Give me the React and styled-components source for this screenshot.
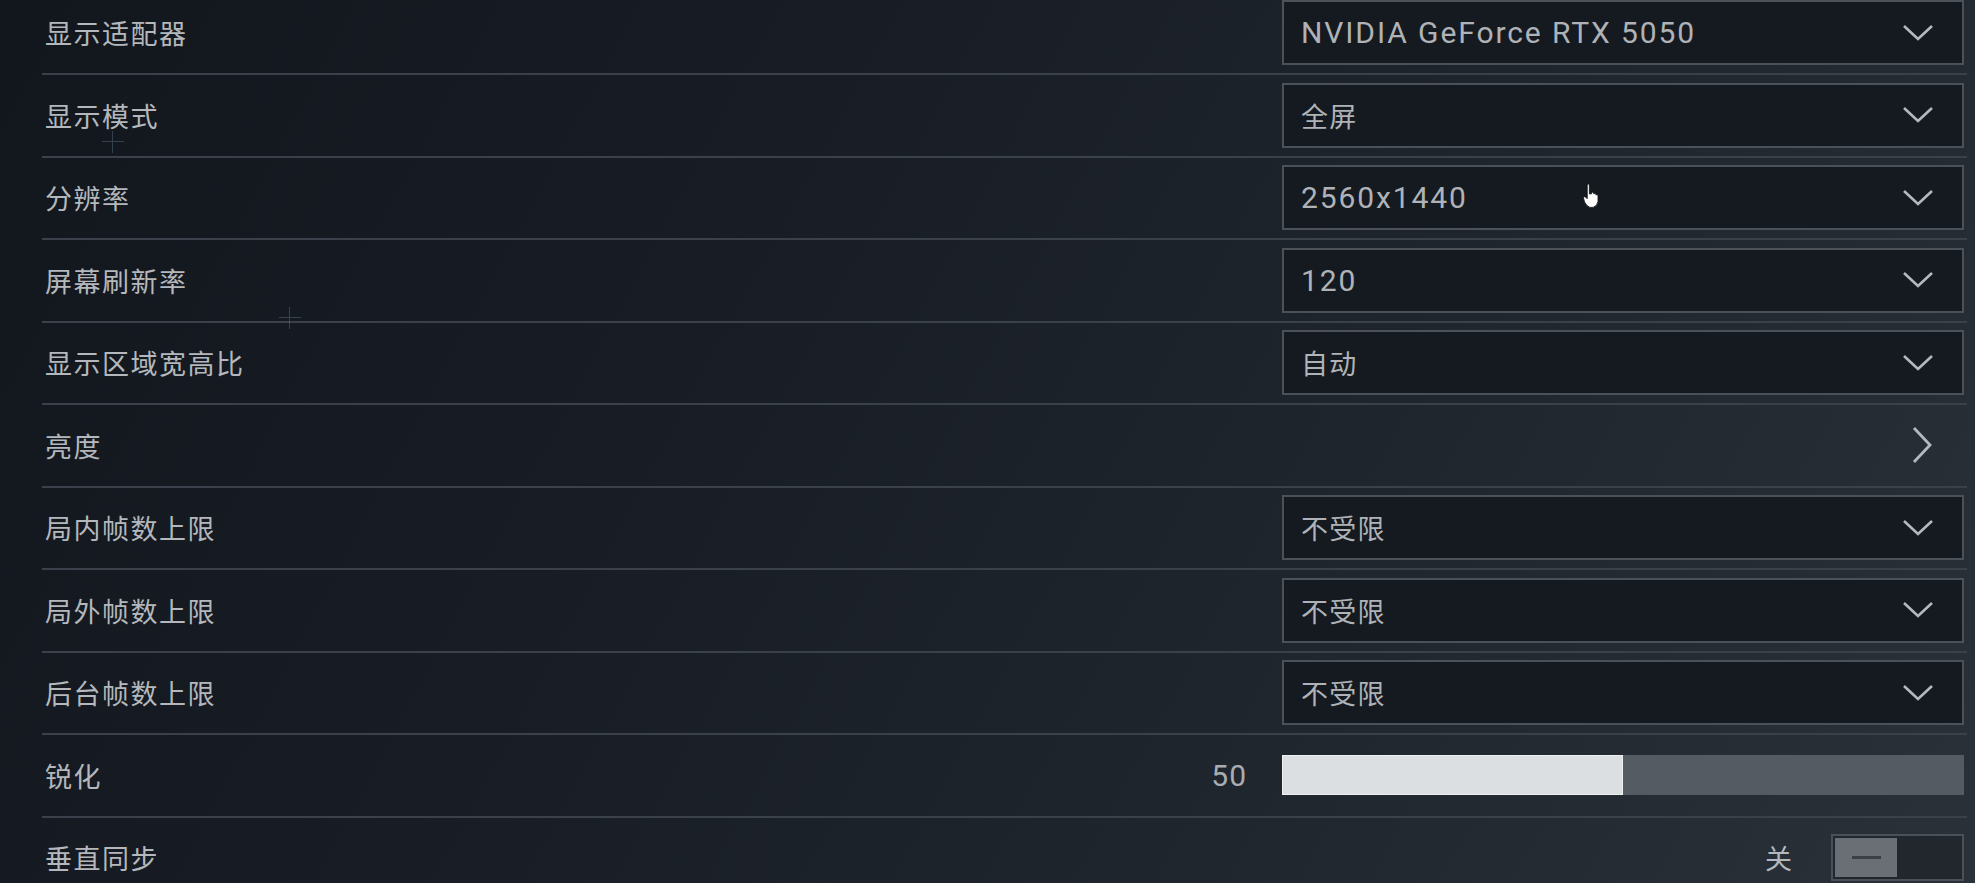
import React from "react";
import styled, { createGlobalStyle } from "styled-components";

const GlobalStyle = createGlobalStyle`
  html, body {
    margin: 0;
    padding: 0;
    background: #181d24;
  }
  * {
    box-sizing: border-box;
  }
`;

// Whole settings panel with the dark game-menu backdrop
const Page = styled.div`
  position: relative;
  width: 100%;
  height: 100vh;
  overflow: hidden;
  padding: 0 8px 0 42px;
  background: linear-gradient(118deg, #12171e 0%, #181d25 35%, #1f252d 65%, #2a3139 100%);
  font-family: "Noto Sans CJK SC", "Noto Sans", sans-serif;
`;

// Faint crosshair marks in the backdrop
const Cross = styled.div`
  position: absolute;
  width: 22px;
  height: 22px;
  opacity: 0.35;

  &::before,
  &::after {
    content: "";
    position: absolute;
    background: #6f8fa0;
  }
  &::before {
    left: 0;
    right: 0;
    top: 10px;
    height: 1px;
  }
  &::after {
    top: 0;
    bottom: 0;
    left: 10px;
    width: 1px;
  }
`;

const List = styled.div`
  margin-top: -7.5px;
`;

const Row = styled.div`
  display: flex;
  align-items: center;
  justify-content: space-between;
  height: 82.5px;
  padding: 0 3px;
  border-bottom: 2px solid #3a414a;
`;

const Label = styled.span`
  font-size: 27px;
  letter-spacing: 1.5px;
  color: #b4b8bc;
`;

const Dropdown = styled.div`
  position: relative;
  width: 682px;
  height: 65px;
  display: flex;
  align-items: center;
  justify-content: space-between;
  padding: 0 28px 0 17px;
  background: #151a20;
  border: 2px solid #4a5159;
`;

const Value = styled.span`
  font-family: ${(p) => (p.$latin ? "Roboto" : "\"Noto Sans CJK SC\"")}, "Noto Sans CJK SC", sans-serif;
  font-size: ${(p) => (p.$latin ? "30px" : "27px")};
  letter-spacing: ${(p) => (p.$latin ? "1.9px" : "1.2px")};
  color: #afb3b7;
`;

const ArrowButton = styled.div`
  display: flex;
  align-items: center;
  justify-content: center;
  margin-right: 32px;
`;

const SliderGroup = styled.div`
  display: flex;
  align-items: center;
  gap: 35px;
`;

const SliderValue = styled.span`
  font-family: Roboto, sans-serif;
  font-size: 30px;
  letter-spacing: 1px;
  color: #a9adb2;
`;

const SliderTrack = styled.div`
  width: 682px;
  height: 40px;
  background: #545b63;
`;

const SliderFill = styled.div`
  height: 100%;
  background: #dcdfe1;
  border: 1px solid #eef0f1;
`;

const ToggleGroup = styled.div`
  display: flex;
  align-items: center;
  gap: 39px;
`;

const ToggleText = styled.span`
  font-size: 27px;
  color: #b4b8bc;
`;

const Toggle = styled.div`
  display: flex;
  width: 133px;
  height: 47px;
  padding: 2px;
  border: 2px solid #4a5058;
  background: #22272e;
`;

const ToggleKnob = styled.div`
  width: 62px;
  display: flex;
  align-items: center;
  justify-content: center;
  background: #696f75;

  &::after {
    content: "";
    width: 29px;
    height: 3px;
    background: #3b4046;
  }
`;

const Cursor = styled.svg`
  position: absolute;
  left: 298px;
  top: 16px;
`;

const ChevronDown = () => (
  <svg width="32" height="18" viewBox="0 0 32 18">
    <polyline points="2,2 16,15 30,2" fill="none" stroke="#b5b9bd" strokeWidth="2.6" />
  </svg>
);

const ChevronRight = () => (
  <svg width="20" height="38" viewBox="0 0 20 38">
    <polyline points="2,2 18,19 2,36" fill="none" stroke="#b5b9bd" strokeWidth="2.8" />
  </svg>
);

const HandCursor = () => (
  <Cursor width="18" height="26" viewBox="0 0 16 24">
    <path
      d="M4.5 1.5 Q5.5 0.5 6.5 1.5 L6.5 10 L8.5 10 L8.5 9 Q9.5 8 10.5 9 L10.5 10 Q11.5 9 12.5 10 L12.5 11 Q13.5 10 14.5 11.5 L14.5 17 Q14 21 10 22.5 L7 22.5 Q4 21.5 2 17.5 L1 13.5 Q1.5 12 3 13 L4.5 14.5 Z"
      fill="#ffffff"
      stroke="#111"
      strokeWidth="0.8"
    />
  </Cursor>
);

const dropdowns = [
  { label: "显示适配器", value: "NVIDIA GeForce RTX 5050", latin: true },
  { label: "显示模式", value: "全屏" },
  { label: "分辨率", value: "2560x1440", latin: true, cursor: true },
  { label: "屏幕刷新率", value: "120", latin: true },
  { label: "显示区域宽高比", value: "自动" },
];

const limits = [
  { label: "局内帧数上限", value: "不受限" },
  { label: "局外帧数上限", value: "不受限" },
  { label: "后台帧数上限", value: "不受限" },
];

const SelectRow = ({ label, value, latin, cursor }) => (
  <Row>
    <Label>{label}</Label>
    <Dropdown>
      <Value $latin={latin}>{value}</Value>
      <ChevronDown />
      {cursor && <HandCursor />}
    </Dropdown>
  </Row>
);

const App = () => {
  const sharpen = 50;

  return (
    <>
      <GlobalStyle />
      <Page>
        <Cross style={{ left: 102, top: 131 }} />
        <Cross style={{ left: 279, top: 307 }} />
        <List>
          {dropdowns.map((d) => (
            <SelectRow key={d.label} {...d} />
          ))}
          <Row>
            <Label>亮度</Label>
            <ArrowButton>
              <ChevronRight />
            </ArrowButton>
          </Row>
          {limits.map((d) => (
            <SelectRow key={d.label} {...d} />
          ))}
          <Row>
            <Label>锐化</Label>
            <SliderGroup>
              <SliderValue>{sharpen}</SliderValue>
              <SliderTrack>
                <SliderFill style={{ width: `${sharpen}%` }} />
              </SliderTrack>
            </SliderGroup>
          </Row>
          <Row>
            <Label>垂直同步</Label>
            <ToggleGroup>
              <ToggleText>关</ToggleText>
              <Toggle>
                <ToggleKnob />
              </Toggle>
            </ToggleGroup>
          </Row>
        </List>
      </Page>
    </>
  );
};

export default App;
